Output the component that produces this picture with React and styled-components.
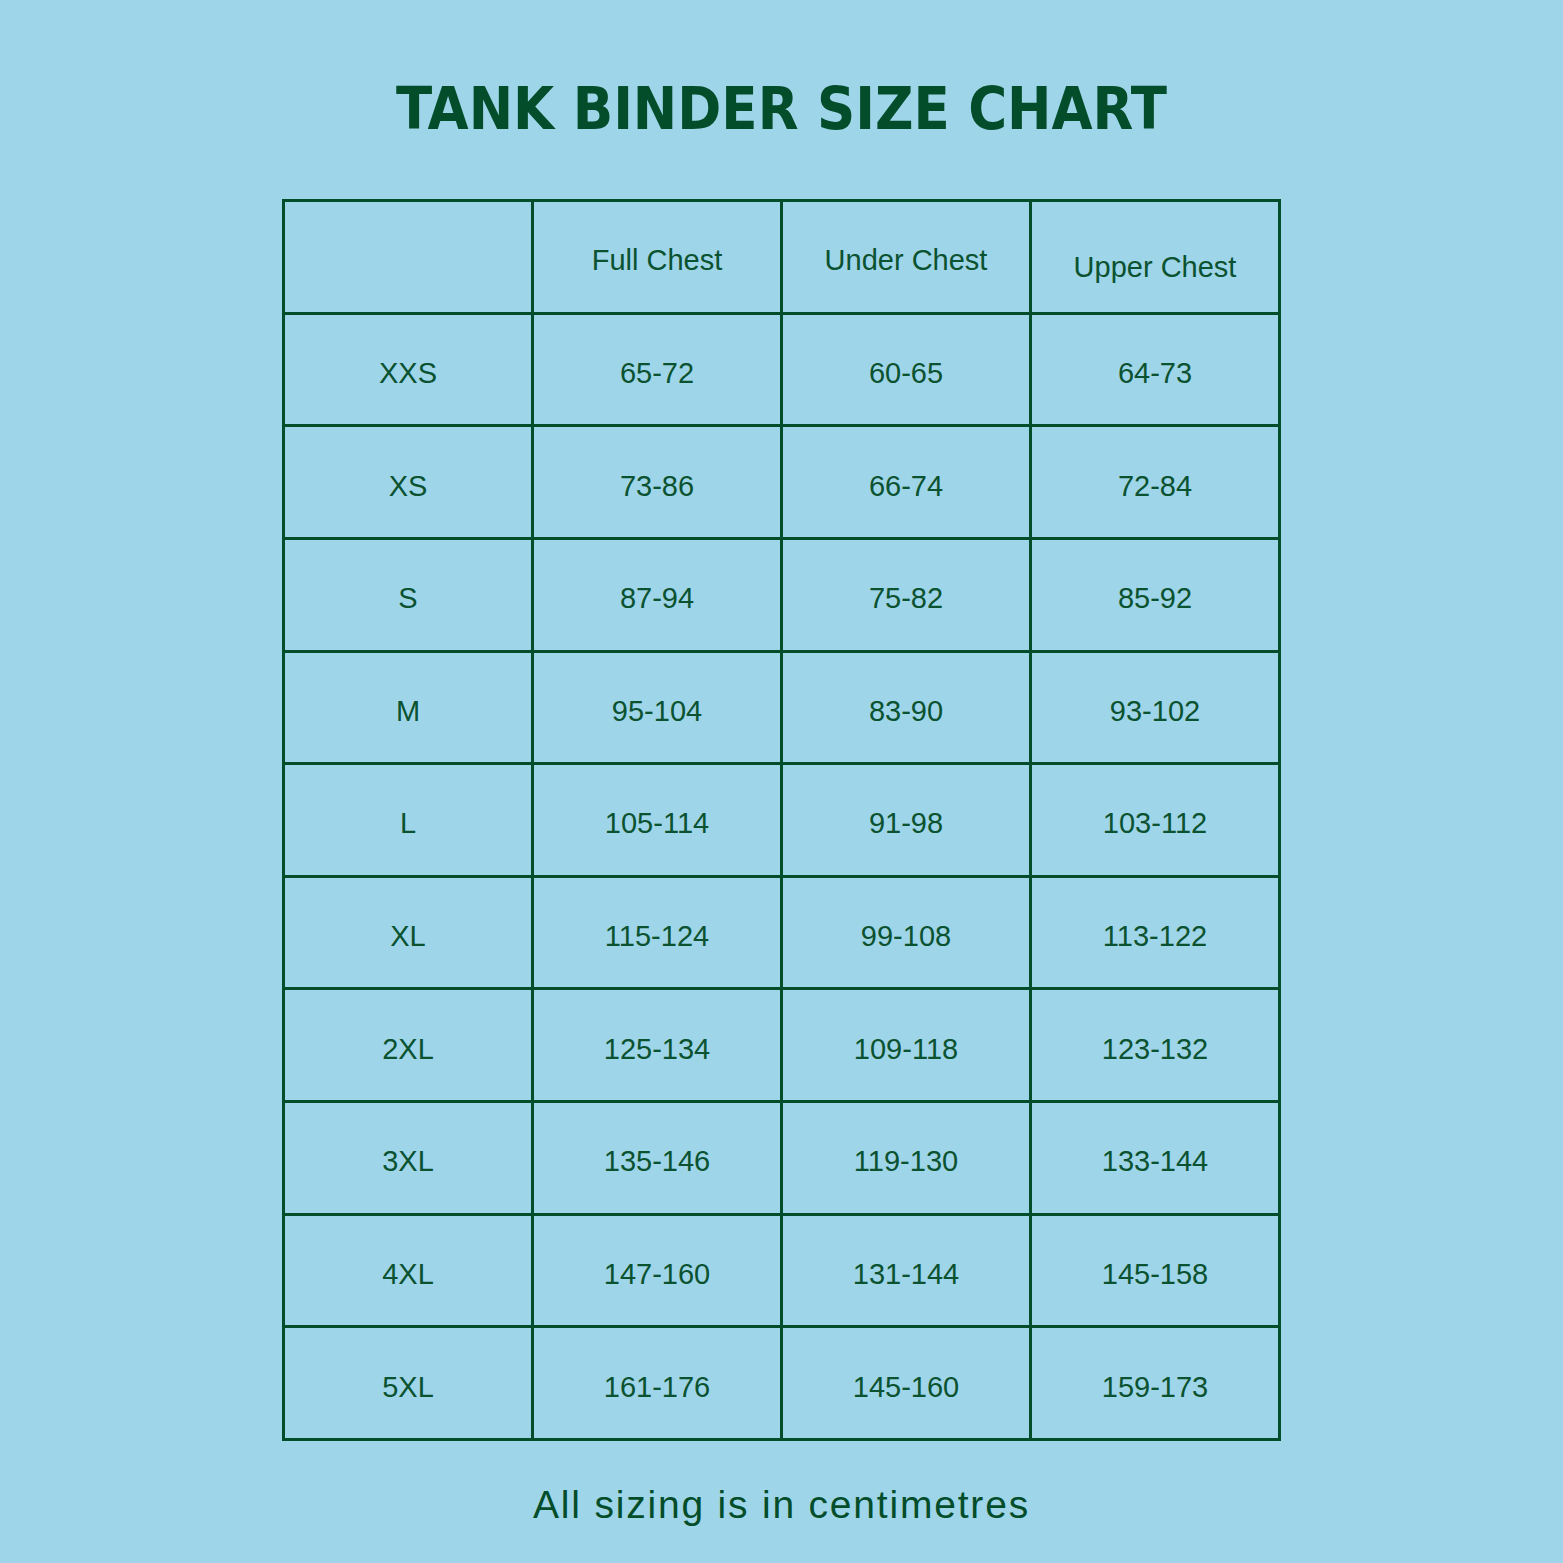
import React from 'react';
import styled, { createGlobalStyle } from 'styled-components';

const GlobalStyle = createGlobalStyle`
  html, body {
    margin: 0;
    padding: 0;
    background: #9fd5e8;
  }
`;

const Page = styled.div`
  width: 1563px;
  height: 1563px;
  background: #9fd5e8;
  color: #034d2a;
  font-family: 'Liberation Sans', Arial, sans-serif;
  display: flex;
  flex-direction: column;
  align-items: center;
  padding-top: 79px;
  box-sizing: border-box;
`;

const Title = styled.h1`
  margin: 0;
  font-family: 'Liberation Sans Narrow', 'DejaVu Sans Condensed', sans-serif;
  font-size: 59px;
  line-height: 1;
  font-weight: 700;
  letter-spacing: 0;
  color: #034d2a;
`;

const Table = styled.div`
  margin-top: 61px;
  width: 999px;
  height: 1242px;
  display: grid;
  grid-template-columns: repeat(4, 1fr);
  grid-template-rows: repeat(11, 1fr);
  gap: 3px;
  padding: 3px;
  box-sizing: border-box;
  background: #034d2a;
`;

const Cell = styled.div`
  background: #9fd5e8;
  display: flex;
  align-items: center;
  justify-content: center;
  font-size: 29px;
  line-height: 1;
  color: #0a5230;
  padding-top: ${({ $shift }) => $shift || 8}px;
  box-sizing: border-box;
`;

const Note = styled.p`
  margin: 44px 0 0;
  font-size: 39px;
  line-height: 1;
  letter-spacing: 1.8px;
  color: #034d2a;
`;

const headers = [
  { label: '', shift: 7 },
  { label: 'Full Chest', shift: 7 },
  { label: 'Under Chest', shift: 7 },
  { label: 'Upper Chest', shift: 21 },
];

const rows = [
  ['XXS', '65-72', '60-65', '64-73'],
  ['XS', '73-86', '66-74', '72-84'],
  ['S', '87-94', '75-82', '85-92'],
  ['M', '95-104', '83-90', '93-102'],
  ['L', '105-114', '91-98', '103-112'],
  ['XL', '115-124', '99-108', '113-122'],
  ['2XL', '125-134', '109-118', '123-132'],
  ['3XL', '135-146', '119-130', '133-144'],
  ['4XL', '147-160', '131-144', '145-158'],
  ['5XL', '161-176', '145-160', '159-173'],
];

const App = () => (
  <>
    <GlobalStyle />
    <Page>
      <Title>TANK BINDER SIZE CHART</Title>
      <Table>
        {headers.map((h, i) => (
          <Cell key={'h' + i} $shift={h.shift}>{h.label}</Cell>
        ))}
        {rows.map((row) =>
          row.map((v, j) => <Cell key={row[0] + j}>{v}</Cell>)
        )}
      </Table>
      <Note>All sizing is in centimetres</Note>
    </Page>
  </>
);

export default App;
